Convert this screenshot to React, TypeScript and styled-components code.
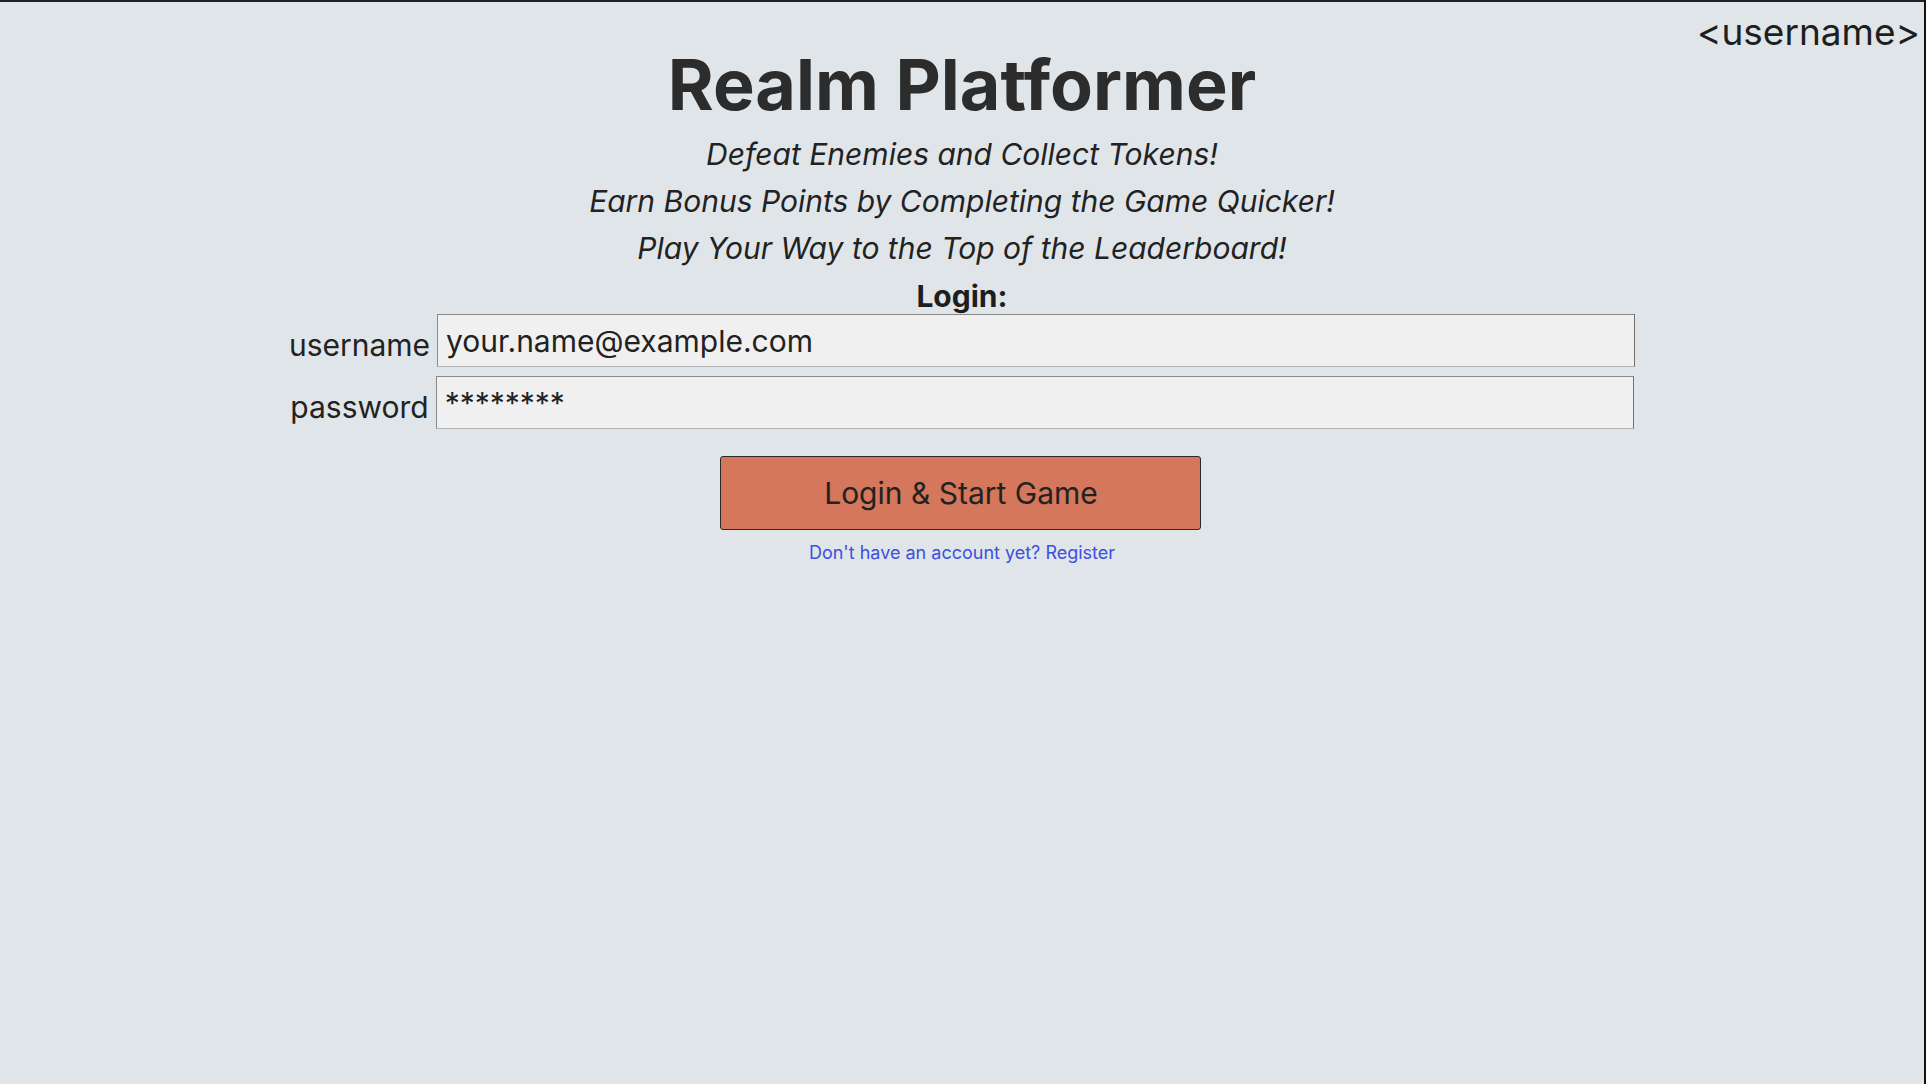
import React from "react";
import styled, { createGlobalStyle } from "styled-components";

const GlobalStyle = createGlobalStyle`
  html, body {
    margin: 0;
    padding: 0;
    background: #111;
  }

  * {
    box-sizing: border-box;
  }
`;

export default function App() {
  return (
    <>
      <GlobalStyle />
      <Page>
        <UserTag>&lt;username&gt;</UserTag>
        <Title>Realm Platformer</Title>
        <Taglines>
          <Tagline>Defeat Enemies and Collect Tokens!</Tagline>
          <Tagline>Earn Bonus Points by Completing the Game Quicker!</Tagline>
          <Tagline>Play Your Way to the Top of the Leaderboard!</Tagline>
        </Taglines>
        <LoginForm onSubmit={(e) => e.preventDefault()}>
          <FormTitle>Login:</FormTitle>
          <Field>
            <Label htmlFor="username">username</Label>
            <Input id="username" type="text" defaultValue="your.name@example.com" />
          </Field>
          <Field>
            <Label htmlFor="password">password</Label>
            <Input id="password" type="text" defaultValue="********" />
          </Field>
          <SubmitButton type="submit">Login &amp; Start Game</SubmitButton>
          <RegisterLink href="#">Don't have an account yet? Register</RegisterLink>
        </LoginForm>
      </Page>
    </>
  );
}

const Page = styled.div`
  position: relative;

  min-height: 100vh;
  width: 1924px;

  display: flex;
  flex-direction: column;
  align-items: center;

  padding-top: 39px;

  background: #e0e5e9;
  border-top: 2px solid #222;

  font-family: Inter, "Noto Sans", sans-serif;
  color: #222;
`;

const UserTag = styled.div`
  position: absolute;
  top: 8px;
  right: 4px;

  font-size: 37px;
  line-height: 44px;
  color: #1e1e1e;
`;

const Title = styled.h1`
  margin: 0;

  font-size: 70px;
  font-weight: 700;
  line-height: 88px;
  color: #2c2c2c;
`;

const Taglines = styled.div`
  margin-top: 2px;

  display: flex;
  flex-direction: column;
  align-items: center;
`;

const Tagline = styled.p`
  margin: 0;

  font-size: 30px;
  font-style: italic;
  line-height: 47px;
  color: #222;
`;

const LoginForm = styled.form`
  margin-top: 6px;

  display: flex;
  flex-direction: column;
  align-items: center;
`;

const FormTitle = styled.h2`
  margin: 0;

  font-size: 30px;
  font-weight: 700;
  line-height: 36px;
  color: #1e1e1e;
`;

const Field = styled.div`
  display: flex;
  align-items: center;
  gap: 7px;

  & + & {
    margin-top: 9px;
  }
`;

const Label = styled.label`
  padding-top: 8px;

  font-size: 30px;
  color: #222;
`;

const Input = styled.input`
  width: 1198px;
  height: 53px;

  padding: 0 8px;

  background: #f0f0f0;
  border: 1px solid #8a8a8a;
  border-bottom-color: #b4b4b4;
  border-right-color: #707070;
  border-radius: 0;

  font-family: Inter, "Noto Sans", sans-serif;
  font-size: 30px;
  color: #222;

  outline: none;
`;

const SubmitButton = styled.button`
  margin: 27px 2px 0 0;

  width: 481px;
  height: 74px;

  background: #d4775c;
  border: 1px solid #2a2a2a;
  border-radius: 3px;

  font-family: Inter, "Noto Sans", sans-serif;
  font-size: 30px;
  color: #222;

  cursor: pointer;
`;

const RegisterLink = styled.a`
  margin-top: 12px;

  font-size: 18px;
  line-height: 22px;
  color: #3d4fe0;
  text-decoration: none;
`;
